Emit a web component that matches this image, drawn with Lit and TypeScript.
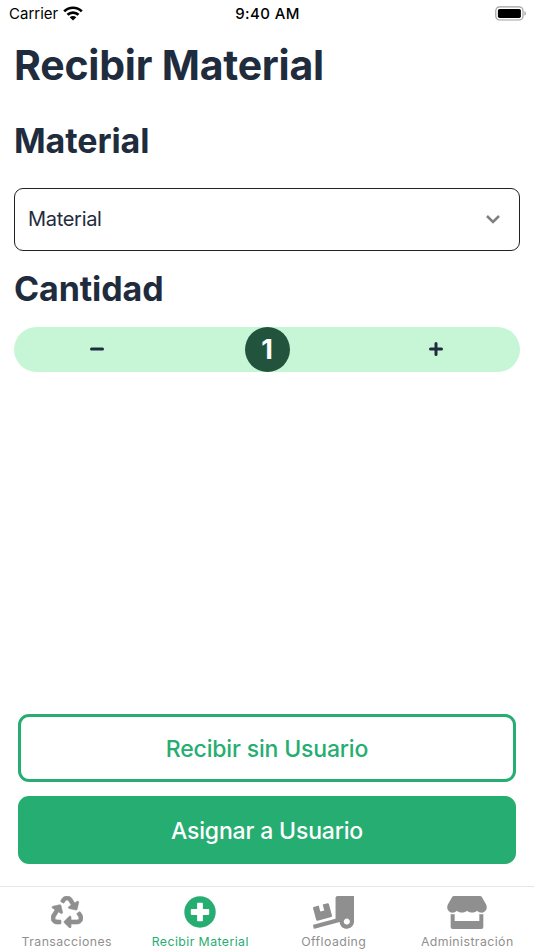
import { LitElement, html, css, svg } from "lit";
import { customElement, property, state } from "lit/decorators.js";
import { classMap } from "lit/directives/class-map.js";

const icons = {
  recycle: svg`<svg width="32" height="32" viewBox="0 0 512 512" fill="currentColor" stroke="currentColor" stroke-width="10"><path d="M184.561 261.903c3.232 13.997-12.123 24.635-24.068 17.168l-40.736-25.455-50.867 81.402C55.606 356.273 70.96 384 96.012 384H148c6.627 0 12 5.373 12 12v40c0 6.627-5.373 12-12 12H96.115c-75.334 0-121.302-83.048-81.408-146.88l50.822-81.388-40.725-25.448c-12.081-7.547-8.966-25.961 4.879-29.158l110.237-25.45c8.611-1.988 17.201 3.381 19.189 11.99l25.452 110.237zm98.561-182.915l41.289 66.076-40.74 25.457c-12.051 7.528-9 25.953 4.879 29.158l110.237 25.45c8.672 1.999 17.215-3.438 19.189-11.99l25.45-110.237c3.197-13.844-11.99-24.719-24.068-17.168l-40.687 25.424-41.263-66.082c-37.521-60.033-125.209-60.171-162.816 0l-17.963 28.766c-3.51 5.62-1.8 13.021 3.82 16.533l33.919 21.195c5.62 3.512 13.024 1.803 16.536-3.817l17.961-28.743c12.712-20.341 41.973-19.676 54.257-.022zM497.288 301.12l-27.515-44.065c-3.511-5.623-10.916-7.334-16.538-3.821l-33.861 21.159c-5.62 3.512-7.33 10.915-3.818 16.536l27.564 44.112c13.257 21.211-2.057 48.96-27.136 48.96H320V336.02c0-14.213-17.242-21.383-27.313-11.313l-80 79.981c-6.249 6.248-6.249 16.379 0 22.627l80 79.989C302.689 517.308 320 510.3 320 495.989V448h95.88c75.274 0 121.335-82.997 81.408-146.88z"/></svg>`,
  plus: svg`<svg width="32" height="32" viewBox="0 0 32 32"><circle cx="16" cy="16" r="15.7" fill="currentColor"/><g fill="#fff"><rect x="13.1" y="6.8" width="5.8" height="18.4" rx="0.8"/><rect x="6.8" y="13.1" width="18.4" height="5.8" rx="0.8"/></g></svg>`,
  truck: svg`<svg width="41" height="32.8" viewBox="0 0 640 512" fill="currentColor"><path d="M50.2 375.6c2.3 8.5 11.1 13.6 19.6 11.3l216.4-58c8.5-2.3 13.6-11.1 11.3-19.6l-49.7-185.5c-2.3-8.5-11.1-13.6-19.6-11.3L151 133.3l24.8 92.7-61.8 16.5-24.8-92.7-77.3 20.7C3.4 172.8-1.7 181.6.6 190.1l49.6 185.5zM384 0c-17.7 0-32 14.3-32 32v323.6L5.9 450c-4.3 1.2-6.8 5.6-5.6 9.8l12.6 46.3c1.2 4.3 5.6 6.8 9.8 5.6l393.7-107.4C418.8 464.1 467.6 512 528 512c61.9 0 112-50.1 112-112V0H384zm144 448c-26.5 0-48-21.5-48-48s21.5-48 48-48 48 21.5 48 48-21.5 48-48 48z"/></svg>`,
  store: svg`<svg width="40" height="33" viewBox="0 0 120 99" fill="currentColor"><path d="M21 0H99Q103 0 105 4L117 25C123 36 117 49 105 50C98 50 94 47 90 44C85 51 66 51 60 44C54 51 35 51 30 44C26 47 22 50 15 50C3 49-3 36 3 25L15 4Q17 0 21 0Z"/><path d="M11 54Q17 56 23 54V75H97V54Q103 56 109 54V93Q109 99 103 99H17Q11 99 11 93Z"/></svg>`,
};

@customElement("status-bar")
class StatusBar extends LitElement {
  static styles = css`
    :host { display: grid; grid-template-columns: 1fr auto 1fr; align-items: center; height: 26px; padding: 0 8px 2px 9px; color: #000; font-size: 15px; }
    .carrier { display: flex; align-items: center; gap: 5px; }
    .name { letter-spacing: 0; }
    .time { font-weight: 500; font-size: 15px; letter-spacing: 0.4px; }
    .battery { justify-self: end; display: block; }
    svg { display: block; }
  `;
  render() {
    return html`
      <div class="carrier"><span class="name">Carrier</span>
        <svg width="20" height="15" viewBox="0 0 20 15"><g fill="none" stroke="#000" stroke-width="2.7"><path d="M1.2 5.4C6.2.5 13.8.5 18.8 5.4"/><path d="M4.5 8.8C7.7 5.8 12.3 5.8 15.5 8.8"/></g><path d="M6.7 11.2C8.6 9.5 11.4 9.5 13.3 11.2L10 14.5Z"/></svg>
      </div>
      <span class="time">9:40 AM</span>
      <svg class="battery" width="31" height="15" viewBox="0 0 31 15"><rect x=".8" y=".8" width="27.2" height="13.2" rx="3.8" fill="none" stroke="#a0a0a0" stroke-width="1.2"/><rect x="2.9" y="2.9" width="23" height="9" rx="1.7"/><path d="M29.5 5v4.8q1.3-.8 1.3-2.4T29.5 5" fill="#999"/></svg>`;
  }
}

@customElement("quantity-stepper")
class QuantityStepper extends LitElement {
  @state() value = 1;
  static styles = css`
    :host { display: grid; grid-template-columns: 1fr 45px 1fr; height: 45px; border-radius: 23px; background: #c7f6d7; }
    button { border: 0; padding: 0 0 2px; background: none; font: inherit; color: #1f2c3d; }
    svg { display: block; }
    .less { padding-left: 76px; }
    .more { padding-left: 139px; }
    .value { display: flex; align-items: center; justify-content: center; border-radius: 50%; background: #22543d; color: #fff; font-size: 27px; font-weight: 700; }
  `;
  render() {
    return html`
      <button class="less" @click=${() => (this.value = Math.max(1, this.value - 1))}>
        <svg width="14" height="14" viewBox="0 0 14 14"><path d="M1.5 7h11" stroke="currentColor" stroke-width="3" stroke-linecap="round"/></svg>
      </button>
      <div class="value">${this.value}</div>
      <button class="more" @click=${() => this.value++}>
        <svg width="14" height="14" viewBox="0 0 14 14"><path d="M1.5 7h11M7 1.5v11" stroke="currentColor" stroke-width="3" stroke-linecap="round"/></svg>
      </button>`;
  }
}

@customElement("tab-bar")
class TabBar extends LitElement {
  @property() active = "receive";
  static styles = css`
    :host { display: grid; grid-template-columns: repeat(4, 1fr); border-top: 1px solid #e6e6e7; height: 63px; }
    .tab { display: flex; flex-direction: column; align-items: center; color: #8f8f8f; font-size: 12.3px; letter-spacing: 0.43px; padding-top: 9px; white-space: nowrap; }
    .active { color: #26ad72; }
    .icon { height: 33px; display: flex; align-items: flex-start; }
    .label { line-height: 18px; margin-top: 4px; }
  `;
  render() {
    const tabs = [
      { id: "transactions", label: "Transacciones", icon: icons.recycle },
      { id: "receive", label: "Recibir Material", icon: icons.plus },
      { id: "offloading", label: "Offloading", icon: icons.truck },
      { id: "admin", label: "Administración", icon: icons.store },
    ];
    return tabs.map((t) => html`
      <div class=${classMap({ tab: true, active: t.id === this.active })}>
        <span class="icon">${t.icon}</span>
        <span class="label">${t.label}</span>
      </div>`);
  }
}

@customElement("app-root")
class AppRoot extends LitElement {
  static styles = css`
    :host { display: flex; flex-direction: column; height: 950px; overflow: hidden; background: #fff; color: #1f2c3d; font-family: Inter, "Liberation Sans", sans-serif; }
    main { flex: 1; padding: 0 14px; display: flex; flex-direction: column; }
    h1, h2 { margin: 0; font-weight: 700; }
    h1 { font-size: 41px; line-height: 50px; margin-top: 12px; letter-spacing: -0.22px; }
    h2 { font-size: 34px; line-height: 42px; letter-spacing: -0.1px; }
    .material { margin-top: 30px; }
    .select { box-sizing: border-box; height: 63px; margin-top: 26px; border: 1px solid #222; border-radius: 9px; padding: 0 18px 2px 13px; display: flex; align-items: center; justify-content: space-between; font-size: 20px; letter-spacing: -0.3px; }
    .quantity { margin: 17px 0; }
    .actions { margin: auto 4px 22px; display: flex; flex-direction: column; gap: 14px; }
    .btn { box-sizing: border-box; height: 68px; padding: 2px 0 0; border: 3px solid #26ad72; border-radius: 11px; background: #fff; color: #26ad72; font: 500 23px Inter, "Liberation Sans", sans-serif; letter-spacing: -0.16px; }
    .solid { background: #26ad72; color: #fff; }
  `;
  render() {
    return html`
      <status-bar></status-bar>
      <main>
        <h1>Recibir Material</h1>
        <h2 class="material">Material</h2>
        <div class="select"><span>Material</span>
          <svg width="16" height="10" viewBox="0 0 16 10"><path d="M2 2l6 6 6-6" fill="none" stroke="#808080" stroke-width="2.5"/></svg>
        </div>
        <h2 class="quantity">Cantidad</h2>
        <quantity-stepper></quantity-stepper>
        <div class="actions">
          <button class="btn">Recibir sin Usuario</button>
          <button class="btn solid">Asignar a Usuario</button>
        </div>
      </main>
      <tab-bar></tab-bar>`;
  }
}
